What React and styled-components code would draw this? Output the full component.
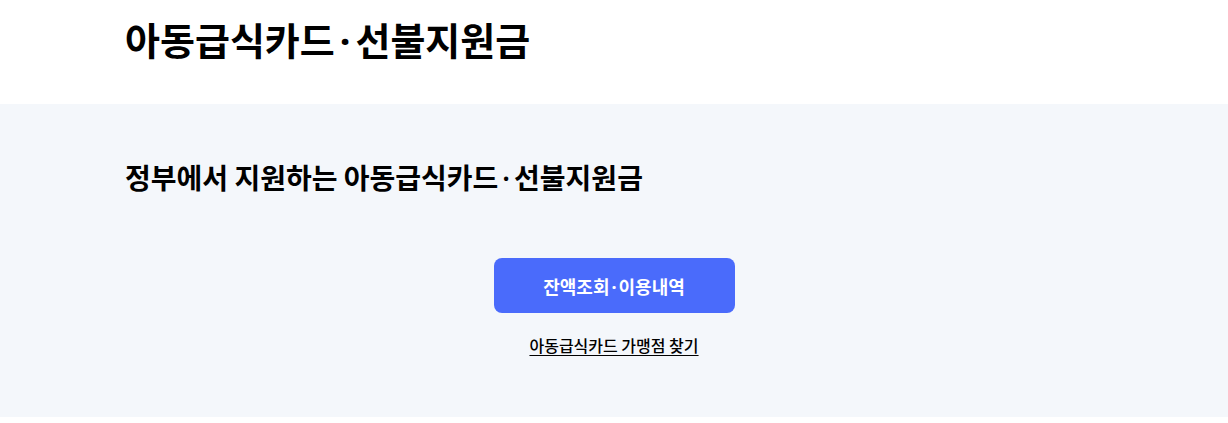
import React from "react";
import styled, { createGlobalStyle } from "styled-components";

const Global = createGlobalStyle`
  html, body { margin: 0; padding: 0; background: #fff; }
  body { font-family: "Noto Sans CJK KR", "Noto Sans", sans-serif; color: #000; }
`;

const Header = styled.header`
  height: 104px;
  box-sizing: border-box;
  padding-top: 13px;
`;

const Inner = styled.div`
  width: 978px;
  margin: 0 auto;
`;

const Title = styled.h1`
  margin: 0;
  font-size: 38px;
  font-weight: 700;
  line-height: 52px;
  letter-spacing: 0;
`;

const Dot = styled.span`
  font-family: "Noto Sans", "Liberation Sans", sans-serif;
  margin: 0 ${(p) => p.$gap}px;
`;

const Band = styled.section`
  background: #f4f7fb;
  height: 313px;
  box-sizing: border-box;
  padding-top: 53px;
`;

const Subtitle = styled.h2`
  margin: 0;
  font-size: 28px;
  font-weight: 600;
  line-height: 40px;
  letter-spacing: 0;
`;

const Actions = styled.div`
  display: flex;
  flex-direction: column;
  align-items: center;
  margin-top: 60px;
  gap: 20px;
`;

const Button = styled.button`
  width: 241px;
  height: 55px;
  border: 0;
  border-radius: 8px;
  background: #4a6bfb;
  color: #fff;
  font-family: inherit;
  font-size: 18px;
  font-weight: 700;
  letter-spacing: 0;
  cursor: pointer;
`;

const Link = styled.a`
  color: #000;
  font-size: 16px;
  font-weight: 500;
  text-decoration: underline;
  text-underline-offset: 3px;
  letter-spacing: 0;
  line-height: 24px;
`;

export default function App() {
  return (
    <>
      <Global />
      <Header>
        <Inner>
          <Title>
            아동급식카드<Dot $gap={5}>·</Dot>선불지원금
          </Title>
        </Inner>
      </Header>
      <Band>
        <Inner>
          <Subtitle>
            정부에서 지원하는 아동급식카드<Dot $gap={4}>·</Dot>선불지원금
          </Subtitle>
          <Actions>
            <Button>
              잔액조회<Dot $gap={2}>·</Dot>이용내역
            </Button>
            <Link href="#">아동급식카드 가맹점 찾기</Link>
          </Actions>
        </Inner>
      </Band>
    </>
  );
}
